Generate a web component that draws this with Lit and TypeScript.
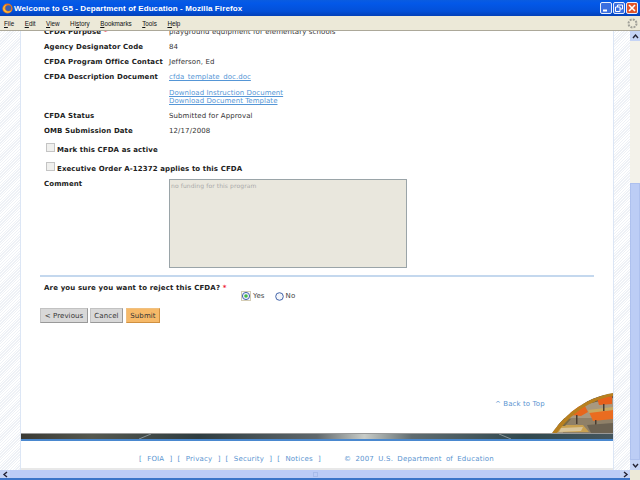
import { LitElement, html, css, svg } from "lit";
import { customElement } from "lit/decorators.js";

@customElement("app-root")
export class AppRoot extends LitElement {
  static styles = css`
    :host { display: flex; flex-direction: column; width: 640px; height: 480px; overflow: hidden; background: #fff;
      font-family: "DejaVu Sans", Verdana, sans-serif; font-size: 7px; letter-spacing: .1px; color: #333; }
    * { box-sizing: border-box; }
    .title { height: 16px; flex: none; display: flex; align-items: center; padding: 0 1px 0 2px; gap: 1px;
      background: linear-gradient(#0a5ce0, #0358e8 20%, #0350d8 70%, #0340b8); color: #fff;
      font: bold 8px "Liberation Sans", sans-serif; letter-spacing: .1px; }
    .title .t { flex: 1; }
    .wbtn { width: 12px; height: 12px; border: 1px solid #e8eefc; border-radius: 2px; background: #3a6fe0; display: block; }
    .wbtn.x { background: #e0542a; }
    .wbtns { display: flex; gap: 1px; margin-right: 1px; }
    .menu { height: 15px; flex: none; display: flex; align-items: center; padding-left: 4px; gap: 10.5px; background: #ece9d8;
      border-bottom: 1px solid #aca899; font: 6.3px "Liberation Sans", sans-serif; letter-spacing: 0; color: #111; }
    .menu .sp { flex: 1; }
    .menu u { text-decoration: underline; }
    .throb { margin-right: 2px; }
    .view { flex: 1; min-height: 0; display: flex; }
    .hatch { background: repeating-linear-gradient(135deg, #fff, #fff 1px, #eef1f6 1px, #eef1f6 2px); flex: none; }
    .hatch.l { width: 21px; border-right: 1px solid #dce6f5; }
    .hatch.r { width: 17px; border-left: 1px solid #dce6f5; }
    .main { flex: 1; min-width: 0; position: relative; overflow: hidden; display: flex; flex-direction: column; }
    .form { height: 402px; flex: none; overflow: hidden; padding: 0 19px; }
    .rows { margin-top: -6px; display: flex; flex-direction: column; line-height: 15px; }
    .row { display: grid; grid-template-columns: 125px 1fr; padding-left: 4px; height: 15px; }
    .row.tall { height: 24px; }
    .row.note { height: 92px; }
    .row b, .ck b, .ask b { font-weight: bold; color: #222; }
    a { color: #5596d6; text-decoration: underline; letter-spacing: .04px; }
    .links { display: flex; flex-direction: column; line-height: 8px; padding-top: 4px; }
    .ck { display: flex; padding-left: 6px; gap: 2px; height: 19px; }
    .ck b { margin-top: 4px; }
    .box { width: 9px; height: 9px; margin-top: 4px; border: 1px solid #c4c4c4; background: #f0f0ee; }
    .ta { width: 238px; height: 89px; margin-top: 2px; background: #e9e7dd; border: 1px solid #9aa4a8; padding: 2px 1px; color: #aaa; font-size: 6px; line-height: 8px; }
    hr { border: 0; border-top: 2px solid #c4d8ee; margin: 6px 0 0 0; }
    .ask { display: flex; padding: 4px 0 0 4px; line-height: 15px; }
    .ask .q { width: 197px; letter-spacing: .15px; }
    .req { color: #e23; }
    .rad { display: flex; gap: 10px; margin-top: 8px; height: 14px; color: #444; }
    .rad span { display: flex; align-items: center; gap: 2px; }
    .btns { display: flex; margin-top: 5px; }
    .btn { height: 15px; display: flex; align-items: center; justify-content: center; background: #d8d8d8; border: 1px solid #c2c2c2; border-right-color: #999; border-bottom-color: #999; color: #333; }
    .btn.prev { width: 48px; margin-right: 2px; }
    .btn.can { width: 33px; margin-right: 3px; }
    .btn.go { width: 34px; background: #f6b968; border-color: #f0c080 #d09040 #d09040 #f0c080; }
    .top { position: absolute; left: 474px; top: 369px; letter-spacing: .1px; color: #5a94d0; text-decoration: none; }
    .photo { position: absolute; right: 0; top: 361px; }
    .band { height: 6px; flex: none; background: linear-gradient(90deg, #3a3a34, #55584f 12%, #2e3c40 30%, #60686c 50%, #c8ccc8 58%, #606c70 66%, #30484e 85%, #45565e); border-top: 1px solid #999; position: relative; display: block; width: 100%; }
    .bline { height: 2px; flex: none; background: #4a88cf; }
    .foot { flex: 1; display: flex; align-items: flex-end; color: #5a94d0; padding: 0 0 5px 118px; letter-spacing: .2px; word-spacing: 2.8px; white-space: nowrap; border-bottom: 2px solid #e8e8e8; }
    .foot span { margin-right: 5px; }
    .foot .cp { margin-left: 18px; word-spacing: 1.8px; }
    .vs { width: 10px; flex: none; background: #f3f2ea; display: flex; flex-direction: column; }
    .sb { height: 10px; width: 10px; flex: none; background: #c5d4f5; display: flex; align-items: center; justify-content: center; }
    .track { flex: 1; display: flex; flex-direction: column; justify-content: flex-end; }
    .thumb { height: 277px; background: #bccdf5; border: 1px solid #aec1ee; }
    .hs { height: 10px; flex: none; display: flex; background: #bccbf6; border-bottom: 2px solid #3c74c8; }
    .hs .sb { height: 8px; }
    .hs .fill { flex: 1; display: flex; justify-content: center; align-items: center; }
    .grip { width: 5px; height: 5px; border: 1px solid #a8bbea; }
    .hs .corner { width: 10px; background: #ece9d8; margin-bottom: -2px; }
  `;

  private arrow(d: string) {
    return html`<svg width="7" height="7" viewBox="0 0 7 7"><path d=${d} fill="none" stroke="#223" stroke-width="1.4" /></svg>`;
  }

  private photo() {
    return html`<svg class="photo" width="70" height="41" viewBox="0 0 70 41">
      <defs><clipPath id="c"><path d="M9 41 C20 25 40 6 70 1 V41 Z" /></clipPath></defs>
      <g clip-path="url(#c)">
        <rect width="70" height="41" fill="#a89880" />
        ${svg`
        <path d="M20 26 L70 26 V41 H20 Z" fill="#8f8068" />
        <path d="M40 6 L70 2 V6 L44 12 Z" fill="#6a5a48" />
        <path d="M25 17 L30 13 L42 14 L45 20 L38 24 L28 23 Z" fill="#e8661c" />
        <path d="M54 6 L69 4 V12 L56 13 Z" fill="#e8601c" />
        <path d="M46 20 L70 18 V27 L50 29 Z" fill="#ea6c20" />
        <path d="M45 18 L70 15 V18 L46 21 Z" fill="#c8a860" />
        <path d="M30 12 L52 8 V10 L32 14 Z" fill="#8a7040" />
        <rect x="33" y="23" width="1.5" height="9" fill="#4a3c30" />
        <rect x="52" y="28" width="1.5" height="10" fill="#4a3c30" />
        <rect x="60" y="12" width="1.5" height="7" fill="#4a3c30" />
        <path d="M10 40 L18 33 L40 33 L46 40 Z" fill="#c8a050" />
        <path d="M18 36 L40 35 L38 39 L16 40 Z" fill="#d8c49a" />
        <path d="M44 33 L70 31 V41 H48 Z" fill="#6c6252" />
        <path d="M20 26 L28 27 L22 34 L14 34 Z" fill="#7a6a44" />`}
        <path d="M9 41 C20 25 40 6 70 1 V4 C42 9 24 27 14 41 Z" fill="#b8801f" />
      </g>
    </svg>`;
  }

  render() {
    return html`
      <div class="title">
        <svg width="11" height="11" viewBox="0 0 13 13"><circle cx="6.5" cy="6.5" r="6" fill="#e8761c" /><circle cx="7.5" cy="6" r="3.4" fill="#3a5fb0" /><path d="M1.5 8C3 12 9 13 11.5 9 8 11 4.5 10.5 3 6.5 3 5 4 3 5.5 2.5 3 2.5 1 5 1.5 8Z" fill="#f6c040" /></svg>
        <span class="t">Welcome to G5 - Department of Education - Mozilla Firefox</span>
        <span class="wbtns">
          <svg class="wbtn" viewBox="0 0 10 10"><rect x="2" y="6.5" width="4" height="2" fill="#fff" /></svg>
          <svg class="wbtn" viewBox="0 0 10 10"><path d="M1.5 4h4.5v4.5h-4.5zM3.5 4v-2h5v4h-2.5" fill="none" stroke="#fff" /></svg>
          <svg class="wbtn x" viewBox="0 0 10 10"><path d="M2 2l6 6M8 2l-6 6" stroke="#fff" stroke-width="1.6" /></svg>
        </span>
      </div>
      <div class="menu">
        <span><u>F</u>ile</span><span><u>E</u>dit</span><span><u>V</u>iew</span><span>Hi<u>s</u>tory</span><span><u>B</u>ookmarks</span><span><u>T</u>ools</span><span><u>H</u>elp</span>
        <span class="sp"></span>
        <svg class="throb" width="11" height="11" viewBox="0 0 11 11"><circle cx="5.5" cy="5.5" r="4" fill="none" stroke="#a0a098" stroke-width="2" stroke-dasharray="2 1.1" /></svg>
      </div>
      <div class="view">
        <div class="hatch l"></div>
        <div class="main">
          <div class="form">
            <div class="rows">
              <div class="row"><b>CFDA Purpose <span class="req">*</span></b><span>playground equipment for elementary schools</span></div>
              <div class="row"><b>Agency Designator Code</b><span>84</span></div>
              <div class="row"><b>CFDA Program Office Contact</b><span>Jefferson, Ed</span></div>
              <div class="row"><b>CFDA Description Document</b><a href="#">cfda_template_doc.doc</a></div>
              <div class="row tall"><span></span><div class="links"><a href="#">Download Instruction Document</a><a href="#">Download Document Template</a></div></div>
              <div class="row"><b>CFDA Status</b><span>Submitted for Approval</span></div>
              <div class="row"><b>OMB Submission Date</b><span>12/17/2008</span></div>
              <div class="ck"><span class="box"></span><b>Mark this CFDA as active</b></div>
              <div class="ck"><span class="box"></span><b>Executive Order A-12372 applies to this CFDA</b></div>
              <div class="row note"><b>Comment</b><div class="ta">no funding for this program</div></div>
            </div>
            <hr />
            <div class="ask">
              <b class="q">Are you sure you want to reject this CFDA? <span class="req">*</span></b>
              <div class="rad">
                <span><svg width="10" height="10" viewBox="0 0 10 10"><rect x=".5" y=".5" width="9" height="9" fill="none" stroke="#a89868" stroke-dasharray="1 1" /><circle cx="5" cy="5" r="3.6" fill="#eef" stroke="#46a" /><circle cx="5" cy="5" r="1.8" fill="#4b4" /></svg>Yes</span>
                <span><svg width="9" height="9" viewBox="0 0 9 9"><circle cx="4.5" cy="4.5" r="3.8" fill="#f4f6fa" stroke="#46a" /></svg>No</span>
              </div>
            </div>
            <div class="btns"><span class="btn prev">&lt; Previous</span><span class="btn can">Cancel</span><span class="btn go">Submit</span></div>
          </div>
          <a class="top">^ Back to Top</a>
          ${this.photo()}
          <svg class="band" viewBox="0 0 592 5" preserveAspectRatio="none"><path d="M118 5L130 0M478 0L490 5" stroke="#8a9498" stroke-width="1" /></svg>
          <div class="bline"></div>
          <div class="foot"><span>[ FOIA ]</span><span>[ Privacy ]</span><span>[ Security ]</span><span>[ Notices ]</span><span class="cp">© 2007 U.S. Department of Education</span></div>
        </div>
        <div class="hatch r"></div>
        <div class="vs">
          <div class="sb">${this.arrow("M1 5l2.5-3 2.5 3")}</div>
          <div class="track"><div class="thumb"></div></div>
          <div class="sb">${this.arrow("M1 2l2.5 3 2.5-3")}</div>
        </div>
      </div>
      <div class="hs">
        <div class="sb">${this.arrow("M5 1l-3 2.5 3 2.5")}</div>
        <div class="fill"><span class="grip"></span></div>
        <div class="sb">${this.arrow("M2 1l3 2.5-3 2.5")}</div>
        <div class="corner"></div>
      </div>
    `;
  }
}
